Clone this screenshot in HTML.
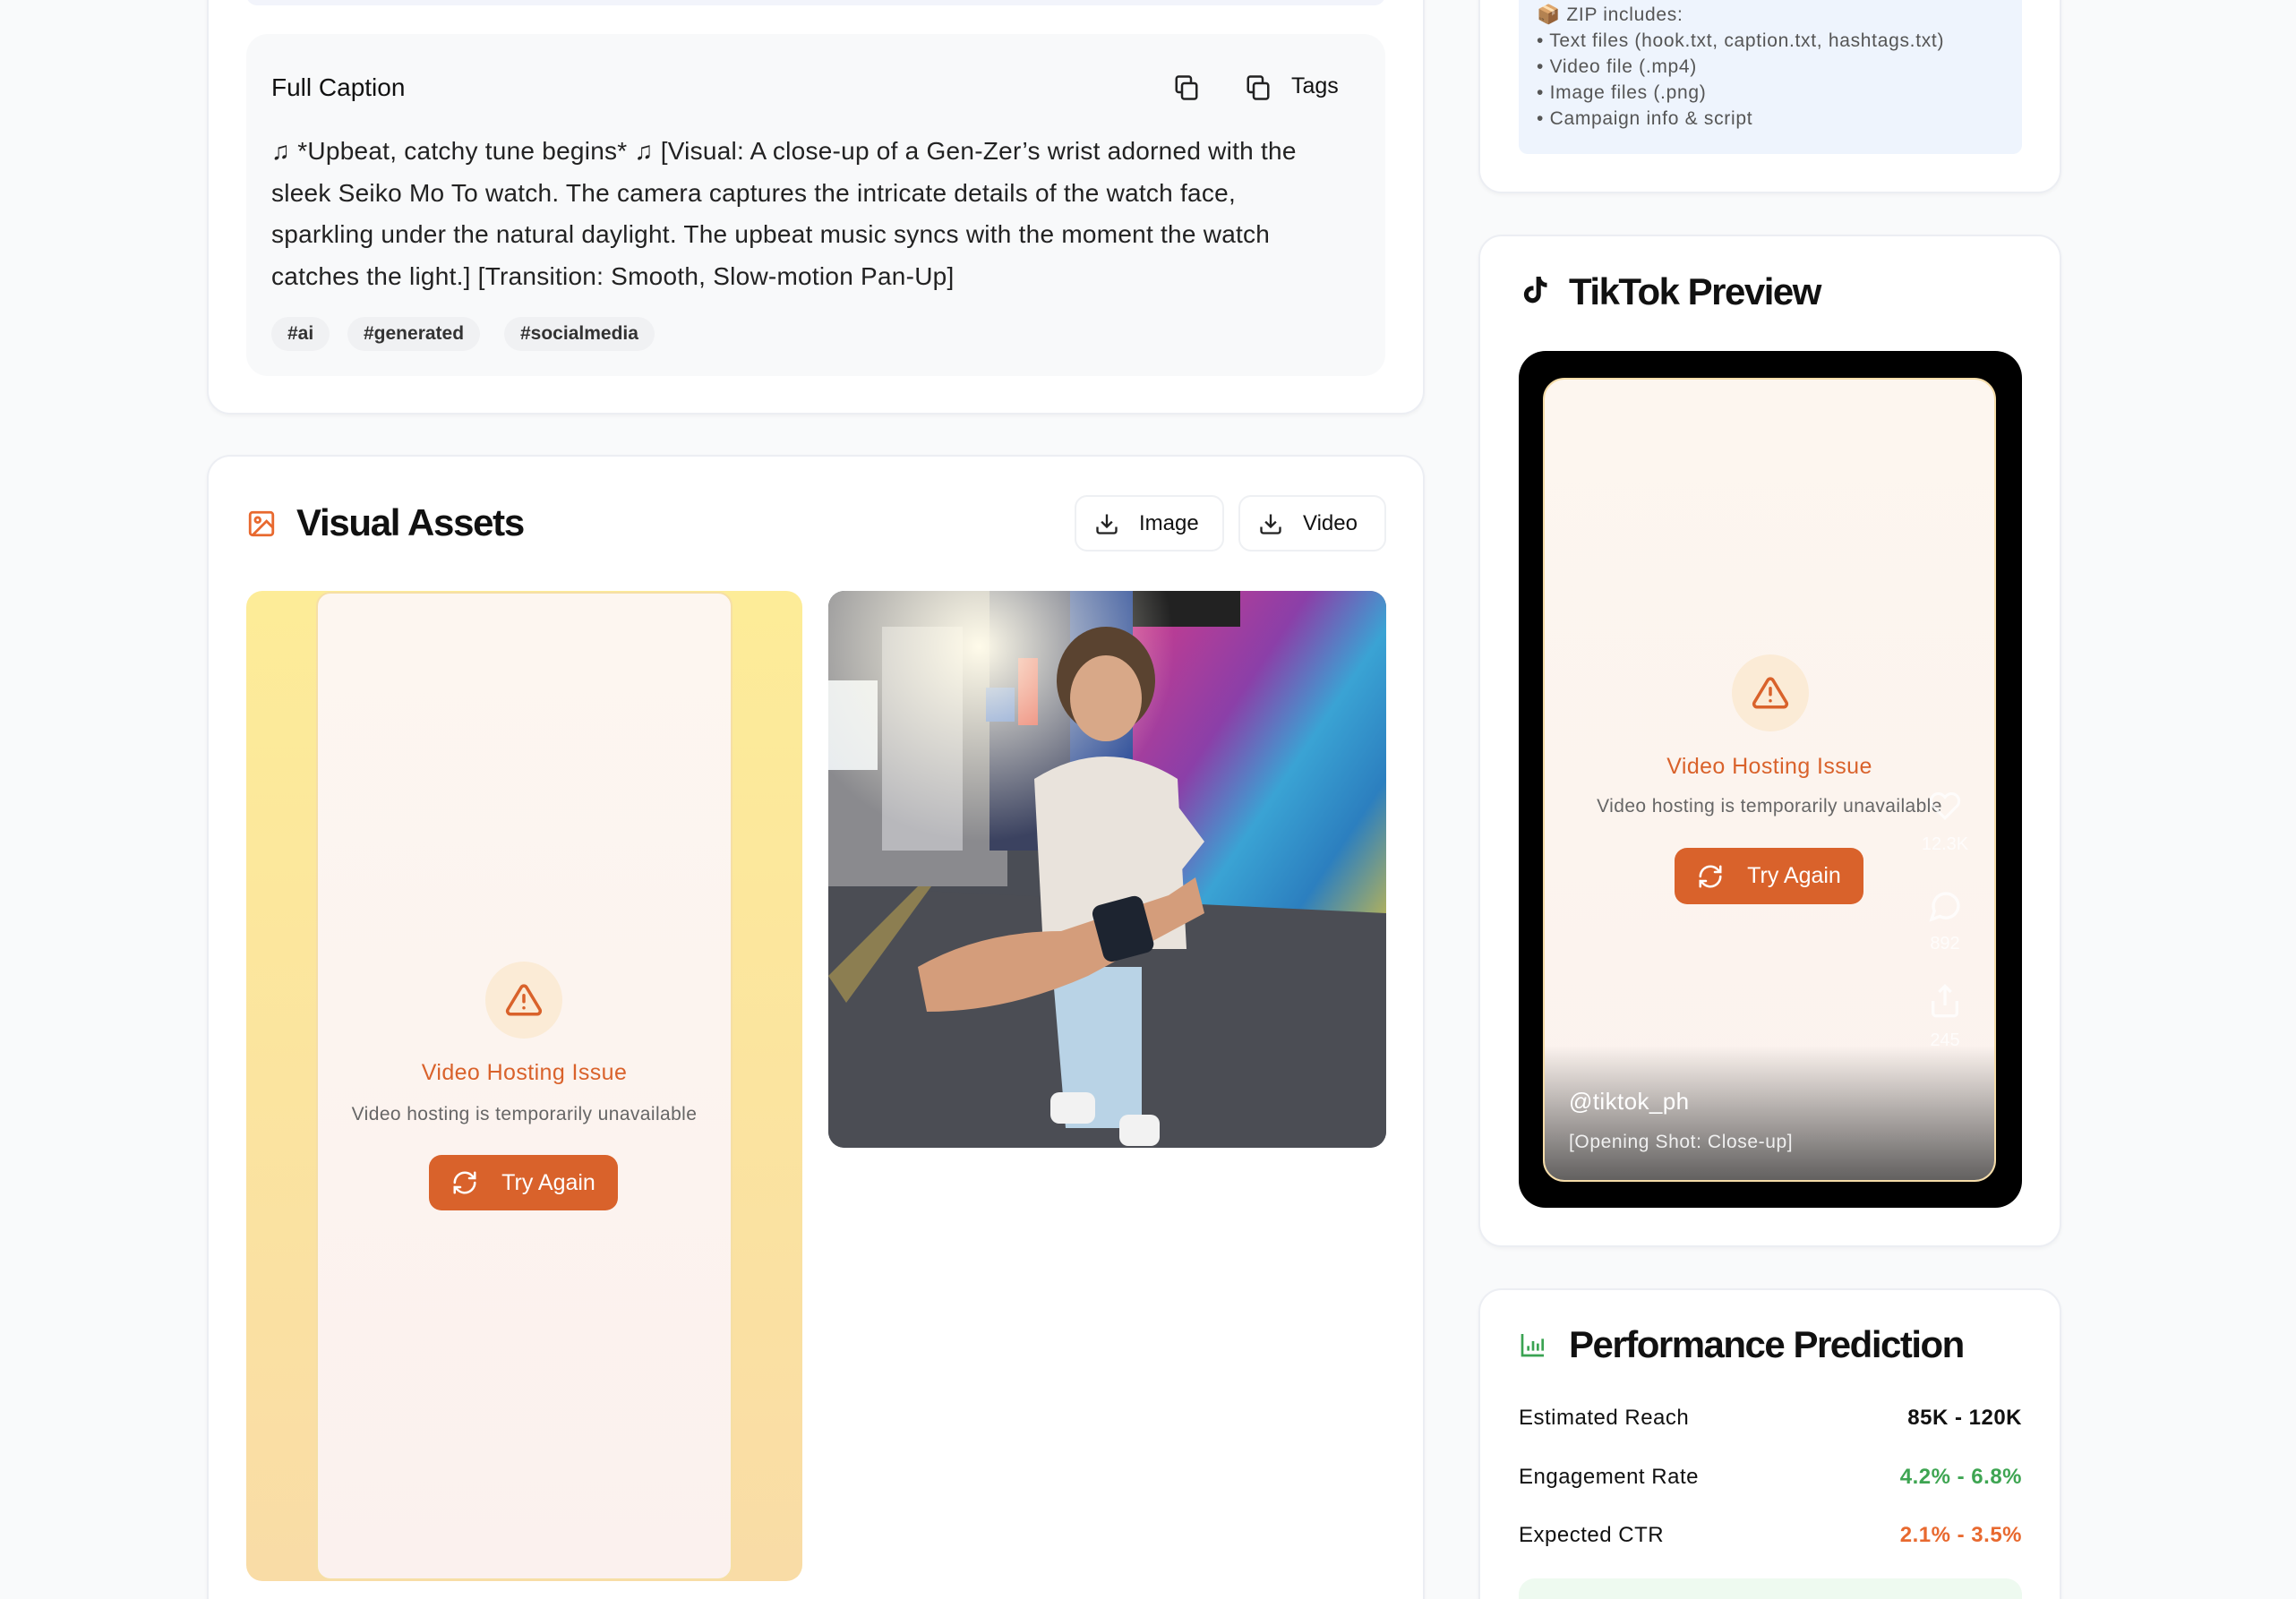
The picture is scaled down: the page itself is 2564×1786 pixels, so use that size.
<!DOCTYPE html>
<html><head><meta charset="utf-8"><style>
*{box-sizing:border-box;margin:0;padding:0}
html,body{width:2564px;height:1786px;overflow:hidden}
body{background:#f9fafb;font-family:"Liberation Sans",sans-serif;position:relative;color:#111}
#w{position:absolute;left:0;top:0;width:2564px;height:1786px;overflow:hidden}
.a{position:absolute}
.card{position:absolute;background:#fff;border:2px solid #eceef3;border-radius:26px;box-shadow:0 2px 4px rgba(0,0,0,.04)}
.pill{position:absolute;top:354px;height:38px;background:#f0f1f3;border-radius:19px;font-size:21px;font-weight:bold;color:#333;line-height:38px;padding:0 18px}
.btn{position:absolute;background:#fff;border:2px solid #eef0f3;border-radius:14px;font-size:24px;color:#111;display:flex;align-items:center;gap:22px;padding-left:20px}
.err-c{position:absolute;border-radius:50%;background:#fbebd6;display:flex;align-items:center;justify-content:center}
.ttl{position:absolute;color:#d9622b;font-size:25px;text-align:center;letter-spacing:.4px}
.sub{position:absolute;color:#666;font-size:21px;text-align:center;letter-spacing:.4px}
.try{position:absolute;background:#d9622b;border-radius:14px;color:#fff;font-size:25px;display:flex;align-items:center;justify-content:center;gap:26px}
.row{position:absolute;left:1696px;width:562px;font-size:24px;display:flex;justify-content:space-between;letter-spacing:.5px}
</style></head><body><div id="w">

<div class="card" style="left:231px;top:-30px;width:1360px;height:493px"></div>
<div class="a" style="left:275px;top:-20px;width:1272px;height:26px;background:#f2f4fb;border-radius:12px"></div>
<div class="a" style="left:275px;top:38px;width:1272px;height:382px;background:#f8f9fa;border-radius:24px"></div>
<div class="a" style="left:303px;top:82px;font-size:28px">Full Caption</div>
<svg class="a" style="left:1310px;top:83px" width="30" height="30" viewBox="0 0 24 24" fill="none" stroke="#222" stroke-width="2"><rect x="8" y="8" width="13" height="14" rx="2"/><path d="M16 8V4a2 2 0 0 0-2-2H5a2 2 0 0 0-2 2v10a2 2 0 0 0 2 2h3"/></svg>
<svg class="a" style="left:1390px;top:83px" width="30" height="30" viewBox="0 0 24 24" fill="none" stroke="#222" stroke-width="2"><rect x="8" y="8" width="13" height="14" rx="2"/><path d="M16 8V4a2 2 0 0 0-2-2H5a2 2 0 0 0-2 2v10a2 2 0 0 0 2 2h3"/></svg>
<div class="a" style="left:1442px;top:82px;font-size:25px">Tags</div>
<div class="a" style="left:303px;top:146px;white-space:nowrap;font-size:28px;line-height:46.6px;color:#222;letter-spacing:.25px">♫ *Upbeat, catchy tune begins* ♫ [Visual: A close-up of a Gen-Zer’s wrist adorned with the<br>sleek Seiko Mo To watch. The camera captures the intricate details of the watch face,<br>sparkling under the natural daylight. The upbeat music syncs with the moment the watch<br>catches the light.] [Transition: Smooth, Slow-motion Pan-Up]</div>
<div class="pill" style="left:303px">#ai</div>
<div class="pill" style="left:388px">#generated</div>
<div class="pill" style="left:563px">#socialmedia</div>

<div class="card" style="left:231px;top:508px;width:1360px;height:1320px"></div>
<svg class="a" style="left:275px;top:568px" width="34" height="34" viewBox="0 0 24 24" fill="none" stroke="#e8692f" stroke-width="2"><rect x="3" y="3" width="18" height="18" rx="2"/><circle cx="9" cy="9" r="2"/><path d="M21 15l-5-5L5 21"/></svg>
<div class="a" style="left:331px;top:560px;font-size:42px;font-weight:bold;letter-spacing:-1.3px">Visual Assets</div>
<div class="btn" style="left:1200px;top:553px;width:167px;height:63px"><svg width="28" height="28" viewBox="0 0 24 24" fill="none" stroke="#222" stroke-width="2"><path d="M21 15v4a2 2 0 0 1-2 2H5a2 2 0 0 1-2-2v-4M7 10l5 5 5-5M12 15V3"/></svg>Image</div>
<div class="btn" style="left:1383px;top:553px;width:165px;height:63px"><svg width="28" height="28" viewBox="0 0 24 24" fill="none" stroke="#222" stroke-width="2"><path d="M21 15v4a2 2 0 0 1-2 2H5a2 2 0 0 1-2-2v-4M7 10l5 5 5-5M12 15V3"/></svg>Video</div>

<div class="a" style="left:275px;top:660px;width:621px;height:1106px;border-radius:18px;background:linear-gradient(180deg,#fdec98,#f9dca6)"></div>
<div class="a" style="left:353px;top:661px;width:465px;height:1104px;border-radius:16px;background:linear-gradient(180deg,#fdf6f0,#fbf1ee);border:2px solid #f6dfa5"></div>
<div class="err-c" style="left:542px;top:1074px;width:86px;height:86px"><svg width="42" height="42" viewBox="0 0 24 24" fill="none" stroke="#d9622b" stroke-width="2" stroke-linecap="round"><path d="M10.3 3.9L1.8 18a2 2 0 0 0 1.7 3h17a2 2 0 0 0 1.7-3L13.7 3.9a2 2 0 0 0-3.4 0zM12 9v4M12 17h.01"/></svg></div>
<div class="ttl" style="left:353px;width:465px;top:1184px">Video Hosting Issue</div>
<div class="sub" style="left:353px;width:465px;top:1233px">Video hosting is temporarily unavailable</div>
<div class="try" style="left:479px;top:1290px;width:211px;height:62px"><svg width="30" height="30" viewBox="0 0 24 24" fill="none" stroke="#fff" stroke-width="2" stroke-linecap="round"><path d="M3 12a9 9 0 0 1 15-6.7L21 8M21 3v5h-5M21 12a9 9 0 0 1-15 6.7L3 16M3 21v-5h5"/></svg>Try Again</div>

<svg class="a" style="left:925px;top:660px;border-radius:18px" width="623" height="622" viewBox="0 0 623 622">
<defs><radialGradient id="sun" cx="0.27" cy="0.1" r="0.35"><stop offset="0" stop-color="#fffbea"/><stop offset="1" stop-color="#fffbea" stop-opacity="0"/></radialGradient>
<linearGradient id="gr" x1="0" y1="0" x2="1" y2="1"><stop offset="0" stop-color="#d23b8a"/><stop offset=".35" stop-color="#8b3fa8"/><stop offset=".55" stop-color="#3aa3d4"/><stop offset=".75" stop-color="#2c7fbf"/><stop offset="1" stop-color="#e0c23a"/></linearGradient></defs>
<rect width="623" height="622" fill="#4a4d55"/>
<rect x="0" y="0" width="200" height="330" fill="#8a8a8e"/>
<rect x="60" y="40" width="90" height="250" fill="#b8b8bc"/>
<rect x="0" y="100" width="55" height="100" fill="#e8ecef"/>
<rect x="180" y="0" width="150" height="290" fill="#3b4260"/>
<rect x="270" y="0" width="80" height="200" fill="#2f4f9a"/>
<rect x="212" y="75" width="22" height="75" fill="#e03a2a"/>
<rect x="176" y="108" width="32" height="38" fill="#2d62c8"/>
<rect x="340" y="0" width="283" height="420" fill="url(#gr)"/>
<rect x="340" y="0" width="120" height="40" fill="#222"/>
<rect width="623" height="622" fill="url(#sun)"/>
<path d="M0 330 L623 360 L623 622 L0 622Z" fill="#4b4d54"/>
<path d="M0 430 L100 330 L115 330 L20 460Z" fill="#b8a050" opacity=".6"/>
<ellipse cx="310" cy="100" rx="55" ry="60" fill="#5a4330"/>
<ellipse cx="310" cy="120" rx="40" ry="48" fill="#d8a888"/>
<path d="M230 210 Q310 160 390 210 L400 400 L240 400Z" fill="#e9e3dc"/>
<path d="M390 240 L420 280 L380 330Z" fill="#e9e3dc"/>
<path d="M250 420 L350 420 L350 600 L265 600Z" fill="#b9d3e6"/>
<path d="M100 420 Q170 380 260 380 L380 340 L410 320 L420 360 L290 430 Q200 470 110 470Z" fill="#d49d7b"/>
<rect x="300" y="345" width="58" height="65" rx="10" fill="#1d2430" transform="rotate(-15 329 377)"/>
<rect x="248" y="560" width="50" height="35" rx="10" fill="#f2f2f2"/>
<rect x="325" y="585" width="45" height="35" rx="10" fill="#f2f2f2"/>
</svg>

<div class="card" style="left:1651px;top:-30px;width:651px;height:246px"></div>
<div class="a" style="left:1696px;top:-20px;width:562px;height:192px;background:#eef4fd;border-radius:10px"></div>
<div class="a" style="left:1716px;top:2px;font-size:21px;color:#555;line-height:29px;letter-spacing:.7px">📦 ZIP includes:<br>• Text files (hook.txt, caption.txt, hashtags.txt)<br>• Video file (.mp4)<br>• Image files (.png)<br>• Campaign info &amp; script</div>

<div class="card" style="left:1651px;top:262px;width:651px;height:1131px"></div>
<svg class="a" style="left:1696px;top:304px" width="36" height="40" viewBox="0 0 24 24" fill="#111"><path d="M16.5 2h-3.4v13.2a2.9 2.9 0 1 1-2.1-2.8V9a6.3 6.3 0 1 0 5.5 6.2V8.5a7.7 7.7 0 0 0 4.5 1.4V6.5a4.4 4.4 0 0 1-4.5-4.5z"/></svg>
<div class="a" style="left:1752px;top:302px;font-size:42px;font-weight:bold;letter-spacing:-1.5px">TikTok Preview</div>
<div class="a" style="left:1696px;top:392px;width:562px;height:957px;background:#000;border-radius:30px"></div>
<div class="a" style="left:1723px;top:422px;width:506px;height:898px;border-radius:24px;background:linear-gradient(180deg,#fdf6ef,#fbf2ee);border:2px solid #f5dca8;overflow:hidden">
 <div class="a" style="left:0;right:0;bottom:0;height:150px;background:linear-gradient(180deg,rgba(60,60,60,0),rgba(60,60,60,.8))"></div>
</div>
<div class="err-c" style="left:1934px;top:731px;width:86px;height:86px"><svg width="42" height="42" viewBox="0 0 24 24" fill="none" stroke="#d9622b" stroke-width="2" stroke-linecap="round"><path d="M10.3 3.9L1.8 18a2 2 0 0 0 1.7 3h17a2 2 0 0 0 1.7-3L13.7 3.9a2 2 0 0 0-3.4 0zM12 9v4M12 17h.01"/></svg></div>
<div class="ttl" style="left:1723px;width:506px;top:842px">Video Hosting Issue</div>
<div class="sub" style="left:1723px;width:506px;top:889px">Video hosting is temporarily unavailable</div>
<div class="try" style="left:1870px;top:947px;width:211px;height:63px"><svg width="30" height="30" viewBox="0 0 24 24" fill="none" stroke="#fff" stroke-width="2" stroke-linecap="round"><path d="M3 12a9 9 0 0 1 15-6.7L21 8M21 3v5h-5M21 12a9 9 0 0 1-15 6.7L3 16M3 21v-5h5"/></svg>Try Again</div>
<svg class="a" style="left:2152px;top:882px" width="40" height="36" viewBox="0 0 24 24" fill="none" stroke="#fff" stroke-width="2" opacity=".8"><path d="M20.8 4.6a5.5 5.5 0 0 0-7.8 0L12 5.7l-1-1.1a5.5 5.5 0 0 0-7.8 7.8L12 21.2l8.8-8.8a5.5 5.5 0 0 0 0-7.8z"/></svg>
<div class="a" style="left:2132px;top:932px;width:80px;text-align:center;color:#fff;opacity:.8;font-size:20px">12.3K</div>
<svg class="a" style="left:2152px;top:992px" width="40" height="40" viewBox="0 0 24 24" fill="none" stroke="#fff" stroke-width="2" opacity=".8"><path d="M21 11.5a8.4 8.4 0 0 1-12.4 7.4L3 21l1.9-5.6A8.4 8.4 0 1 1 21 11.5z"/></svg>
<div class="a" style="left:2132px;top:1043px;width:80px;text-align:center;color:#fff;opacity:.8;font-size:20px">892</div>
<svg class="a" style="left:2152px;top:1098px" width="40" height="40" viewBox="0 0 24 24" fill="none" stroke="#fff" stroke-width="2" opacity=".8"><path d="M4 12v8a2 2 0 0 0 2 2h12a2 2 0 0 0 2-2v-8M16 6l-4-4-4 4M12 2v13"/></svg>
<div class="a" style="left:2132px;top:1151px;width:80px;text-align:center;color:#fff;opacity:.8;font-size:20px">245</div>
<div class="a" style="left:1752px;top:1215px;color:#fff;font-size:26px;letter-spacing:.4px">@tiktok_ph</div>
<div class="a" style="left:1752px;top:1264px;color:#f0f0f0;font-size:21px;letter-spacing:.6px">[Opening Shot: Close-up]</div>

<div class="card" style="left:1651px;top:1439px;width:651px;height:400px"></div>
<svg class="a" style="left:1696px;top:1486px" width="32" height="32" viewBox="0 0 24 24" fill="none" stroke="#3aa352" stroke-width="2"><path d="M3 3v18h18M8 17v-4M12 17V9M16 17v-6M20 17V7"/></svg>
<div class="a" style="left:1752px;top:1478px;font-size:42px;font-weight:bold;letter-spacing:-1.5px">Performance Prediction</div>
<div class="row" style="top:1570px"><span>Estimated Reach</span><b>85K - 120K</b></div>
<div class="row" style="top:1636px"><span>Engagement Rate</span><b style="color:#3ea552">4.2% - 6.8%</b></div>
<div class="row" style="top:1701px"><span>Expected CTR</span><b style="color:#e8692f">2.1% - 3.5%</b></div>
<div class="a" style="left:1696px;top:1763px;width:562px;height:60px;background:#eefaf0;border-radius:18px"></div>
</div></body></html>
